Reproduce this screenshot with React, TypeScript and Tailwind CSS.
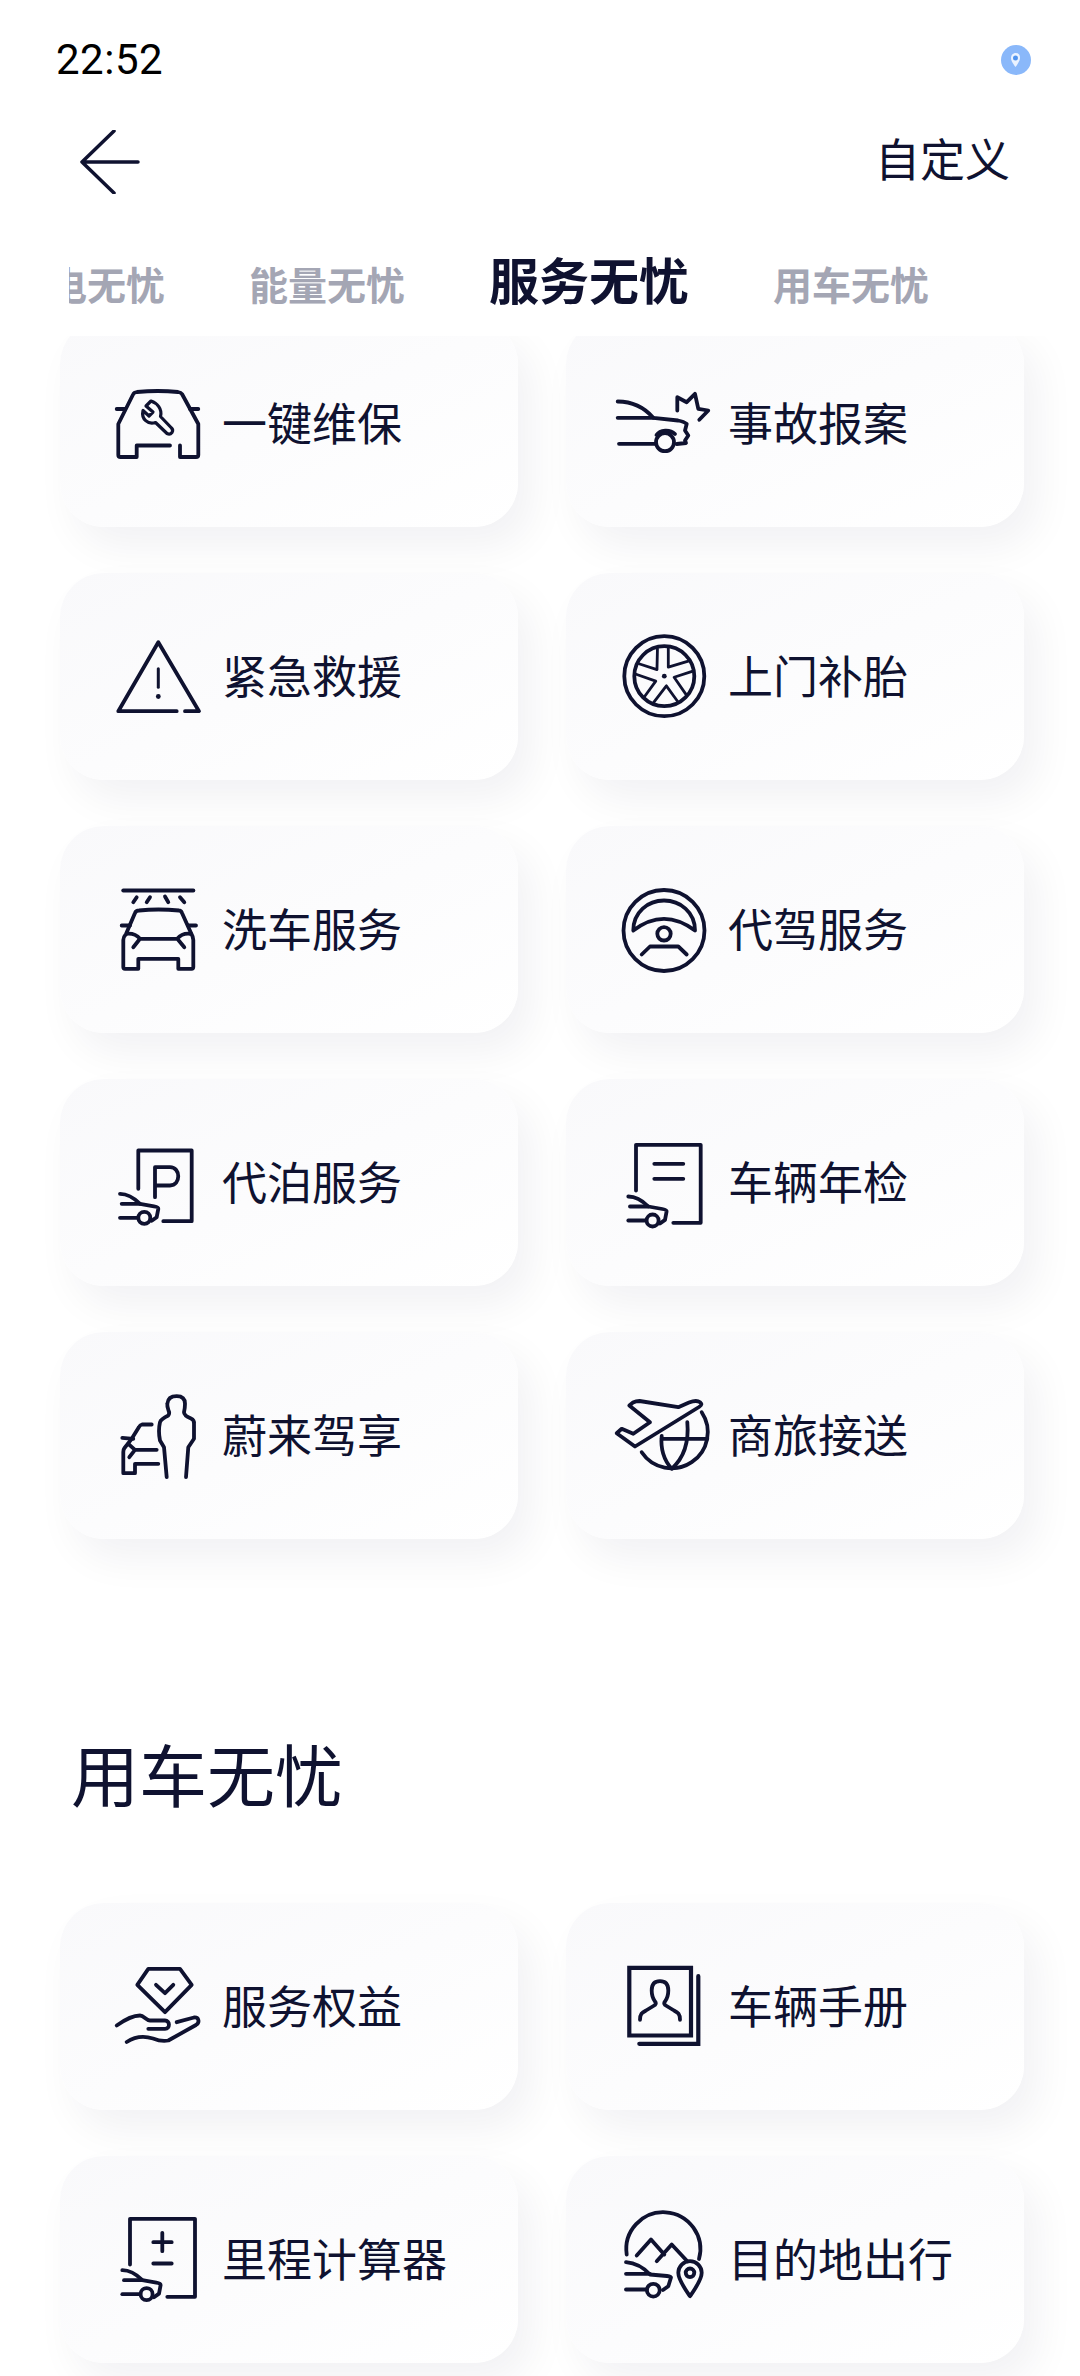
import type { ReactNode } from "react";

const cjk = "font-['Noto_Sans_CJK_SC','Noto_Sans',sans-serif]";

function Ico({ children }: { children: ReactNode }) {
  return (
    <svg
      viewBox="0 0 90 90"
      className="w-[90px] h-[90px] shrink-0 overflow-visible"
      fill="none"
      stroke="#0f1230"
      strokeWidth={3.8}
      strokeLinecap="round"
      strokeLinejoin="round"
    >
      {children}
    </svg>
  );
}

// small side-view car that sits on the document style icons
function MiniCar({ x, y }: { x: number; y: number }) {
  return (
    <g transform={`translate(${x} ${y})`}>
      <path d="M0 0C8 0 14 4 20 10L34 12.5C37 13 38.5 13.5 38.3 15L36.7 23.4L31.7 27" />
      <path d="M1.7 10H20" />
      <path d="M0 24H17.5" />
      <circle cx="24.3" cy="24" r="6" />
    </g>
  );
}

const icons: Record<string, ReactNode> = {
  一键维保: (
    <Ico>
      <path d="M55 66.5H21.7V78H5.5Q3.3 78 3.3 76V45L18.3 15Q19 13.5 22 13Q43 11 63 13Q66 13.5 67 15L83.3 45V76Q83.3 78 81 78H65V66.5" />
      <path d="M1.7 30H10M83.3 30H75" />
      <path d="M36 22L31 27L38 33L34 37L28 31.5C26 40 33 46 40.5 43.5L52 54.5Q55 56 57 53.5Q58.5 51 56.5 49L45.5 37.5C47.5 30 42 24 36 22Z" strokeWidth={3.2} />
    </Ico>
  ),
  事故报案: (
    <Ico>
      <path d="M-3.3 22.5C10 22.5 22 27 32.3 38.8L57 41.5Q63 42.5 65.7 45L64 51.5L67.3 56.5L64 61.5L65 64L55.7 65" />
      <path d="M-3.3 38.8H32.3" />
      <path d="M-2 64.8H35" />
      <circle cx="44" cy="63.2" r="9" />
      <path d="M35.5 56C39 50.5 49 50 54 55" />
      <path d="M56.3 31.5V18.2L65.7 23.2L74 14.8L77.3 29.8L87.3 31.5L78.3 40.8" />
    </Ico>
  ),
  紧急救援: (
    <Ico>
      <path d="M61.7 79.2H3.3L43.3 10.2L84 79.2H70" />
      <path d="M43.3 36.8V55.2" strokeWidth={3} />
      <circle cx="43.3" cy="64.5" r="2.4" fill="#0f1230" stroke="none" />
    </Ico>
  ),
  上门补胎: (
    <Ico>
      <circle cx="43.3" cy="44.2" r="40" />
      <circle cx="43.3" cy="44.2" r="30" />
      <circle cx="43.3" cy="44.2" r="2.4" fill="#0f1230" stroke="none" />
      {[0, 72, 144, 216, 288].map((a) => (
        <path key={a} transform={`translate(43.3 44.2) rotate(${a})`} d="M4 -28L4 -9L24 -15" strokeWidth={2.8} />
      ))}
    </Ico>
  ),
  洗车服务: (
    <Ico>
      <path d="M8.3 5.5H78.3" strokeWidth={4} />
      <path d="M18.3 17.2L21.7 12.2M31.7 17.2L35 12.2M53.3 17.2L50 11.5M69.3 17.2L65 12.2" />
      <path d="M23.3 73.8V83.8H10Q8.3 83.8 8.3 82V55Q8.3 52 11 49L20 28Q21 25.5 24 25.5Q43 23.5 64 25.5Q66 25.5 67 28L76 48Q78.3 52 78.3 55V82Q78.3 83.8 76.5 83.8H63.3V73.8Z" />
      <path d="M6.7 40.5H15M73.3 40.5H81" />
      <path d="M11.7 48.8Q20 48 25 53.8L18.3 62.2M25 53.8H62.3M75 48.8Q67 48 62.3 53.8L69.3 62.2" />
    </Ico>
  ),
  代驾服务: (
    <Ico>
      <circle cx="43" cy="45.5" r="40.5" />
      <path d="M12.3 45.5C12.3 27 27 15.5 43 15.5C59 15.5 74 27 74 45.5C64 38 54 33.8 43 33.8C32 33.8 22 38 12.3 45.5Z" />
      <circle cx="43" cy="48.8" r="6.7" />
      <path d="M20.7 69.5L29 61.5H57.3L65.7 69.5" />
    </Ico>
  ),
  代泊服务: (
    <Ico>
      <path d="M23.3 50.8V12.5H76.7V83.2H48.3" />
      <path d="M40 59.2V29.2H55C66 29.2 66 47.5 55 47.5H40" />
      <MiniCar x={5} y={55.8} />
    </Ico>
  ),
  车辆年检: (
    <Ico>
      <path d="M15 52.5V6.8H79.7V84.8H52.3" />
      <path d="M33.3 25.8H62.3M33.3 40.8H62.3" />
      <MiniCar x={7.3} y={58.5} />
    </Ico>
  ),
  蔚来驾享: (
    <Ico>
      <path d="M51.7 86.2L49 56.2L45 49.5Q43 40 45 31.2Q46 28 53.3 24.5Q55 22 53.5 19.5Q52 15 52.3 12.8Q53 5.2 61.7 5.2Q70 5.2 70 12.8Q70 17 69 21.2Q69 24.5 76 27.5Q79.5 29 79 33V47.8L73.3 56.2L71 86.2" />
      <path d="M36.7 33.5H27Q25 34 24 36L16.7 47.8L9.5 57Q8.3 58.5 8.3 61V82.2H20V72.8H43.3" />
      <path d="M7.3 46.8L18.3 47.8" />
      <path d="M13.3 52.8L20 58.8L14.3 66.2M20 58.8H41.7" />
    </Ico>
  ),
  商旅接送: (
    <Ico>
      <path d="M79 11.2C76 9 72 10 68 11.5L57.3 16.2L18.5 10Q15 10 12 11.5L8.3 14.5L29 31.2L12.3 42.8L0.7 37.8L-4.3 42.2L14 55.5L78 16C81 14 81 13 79 11.2Z" />
      <path d="M80.7 21.2A35 35 0 1 1 20.7 61.2" />
      <path d="M40.7 47.8H86.3" />
      <path d="M66.3 31.2C68 50 64 66 50.7 77.8C42 68 39.5 57 40.7 45" />
    </Ico>
  ),
  服务权益: (
    <Ico>
      <path d="M33.3 6.8H65L76.7 22.8L50 50.2L22.3 22.8Z" />
      <path d="M41 22.8L50 31.2L58.3 22.8" />
      <path d="M1.7 63.5C8 59 17 53.5 25 53.5C29 53.5 31 58.5 35 58.5H50C55 58.5 55.5 66.8 50 66.8H33.3" />
      <path d="M61.7 60.2L79 55.5C84 55 85 60.5 81 63L53.3 78.5C48 79.5 43 78.5 38 76.5C30 74 20 74.5 11.7 80" />
    </Ico>
  ),
  车辆手册: (
    <Ico>
      <path d="M8.3 5.8H70V73.5H8.3Z" strokeWidth={4.2} strokeLinecap="butt" strokeLinejoin="miter" />
      <path d="M77.3 14.2V81.8H18.3" strokeWidth={4.2} strokeLinejoin="miter" />
      <path d="M19 57.8C19 52 21 50.5 25 48.5L34 43Q35.5 41.5 34 39.5C31.5 36 30.7 33 30.7 28.5C30.7 22 34 19.2 39 19.2C44 19.2 47.3 22 47.3 28.5C47.3 33 46.5 36 44 39.5Q42.5 41.5 44 43L53 48.5C57 50.5 59 52 59 57.8" />
    </Ico>
  ),
  里程计算器: (
    <Ico>
      <path d="M15 49.5V3.8H80V81.8H52.3" />
      <path d="M38.3 27.2H56.7M47.3 17.8V36.2M38.3 48.5H56.7" />
      <MiniCar x={7.3} y={55.2} />
    </Ico>
  ),
  目的地出行: (
    <Ico>
      <path d="M5.7 39.5A37 37 0 1 1 78 44" />
      <path d="M15.7 40.5L30 24.5L43.3 39.5M35.7 46.2L50.7 29.5L66.3 46.2" />
      <path d="M69 81.2C64 74 57.3 65 57.3 57.8A11.7 11.7 0 0 1 80.7 57.8C80.7 65 74 74 69 81.2Z" />
      <circle cx="69" cy="57.8" r="4.3" />
      <path d="M5 47.2C14 48 22 52 29 59.5L46 61Q50 61.5 50 62.5L47.3 71.2L42 75" />
      <path d="M5 58.8H29" />
      <path d="M5 74.5H25.7" />
      <circle cx="32.3" cy="75.2" r="6.4" />
    </Ico>
  ),
};

function Card({ label }: { label: string }) {
  return (
    <div className="h-[207px] flex items-center gap-[17px] pl-[55px] rounded-[44px] bg-gradient-to-br from-[#f9f9fb] to-[#ffffff] shadow-[14px_20px_40px_rgba(20,20,50,0.055),-2px_2px_3px_rgba(255,255,255,0.9)]">
      {icons[label]}
      <span className="text-[45px] leading-none text-[#0f1230] pb-[5px]">{label}</span>
    </div>
  );
}

function Grid({ items }: { items: string[] }) {
  return (
    <div className="grid grid-cols-2 gap-x-[48px] gap-y-[46px] pl-[60px] pr-[56px]">
      {items.map((item) => (
        <Card key={item} label={item} />
      ))}
    </div>
  );
}

export default function App() {
  const tabs = ["充电无忧", "能量无忧", "服务无忧", "用车无忧"];

  return (
    <div className={`w-[1080px] h-[2376px] bg-white overflow-hidden ${cjk}`}>
      {/* Status bar */}
      <div className="h-[120px] flex items-center justify-between pl-[56px] pr-[49px]">
        <span className="font-['Roboto',sans-serif] text-[42px] leading-none tracking-[0.5px] text-black">22:52</span>
        <svg viewBox="0 0 30 30" className="w-[30px] h-[30px]">
          <circle cx="15" cy="15" r="15" fill="#8ab8fa" />
          <path d="M15 8C11.5 8 10 10.5 10 13C10 16 13 20 14.5 22C16 20 19 16 19 13C19 10.5 18 8 15 8Z" fill="#eaf2ff" />
          <circle cx="14.5" cy="13" r="2.5" fill="#4f93ee" />
        </svg>
      </div>

      {/* Nav */}
      <div className="h-[80px] flex items-center justify-between pl-[80px] pr-[70px]">
        <svg viewBox="0 0 60 64" className="w-[60px] h-[64px] mt-[3px]" fill="none" stroke="#0f1230" strokeWidth={3.5} strokeLinecap="round" strokeLinejoin="round">
          <path d="M34 1L2 32L34 63M2 32H58" />
        </svg>
        <span className="text-[45px] leading-none text-[#0f1230] pb-[5px]">自定义</span>
      </div>

      {/* Tabs */}
      <div className="h-[136px] ml-[69px] overflow-hidden">
        <div className="flex items-baseline gap-[84px] -ml-[60px] pt-[53px] w-max">
          {tabs.map((tab) => (
            <span
              key={tab}
              className={
                tab === "服务无忧"
                  ? "text-[50px] leading-none font-bold text-[#0f1230]"
                  : "text-[39px] leading-none font-bold text-[#a4a6b4]"
              }
            >
              {tab}
            </span>
          ))}
        </div>
      </div>

      {/* List */}
      <div className="h-[2040px] overflow-hidden">
        <div className="-mt-[16px]">
          <Grid items={["一键维保", "事故报案", "紧急救援", "上门补胎", "洗车服务", "代驾服务", "代泊服务", "车辆年检", "蔚来驾享", "商旅接送"]} />
          <h2 className="text-[68px] leading-none font-normal text-[#0f1230] pl-[71px] mt-[200px] mb-[96px]">用车无忧</h2>
          <Grid items={["服务权益", "车辆手册", "里程计算器", "目的地出行"]} />
        </div>
      </div>
    </div>
  );
}
